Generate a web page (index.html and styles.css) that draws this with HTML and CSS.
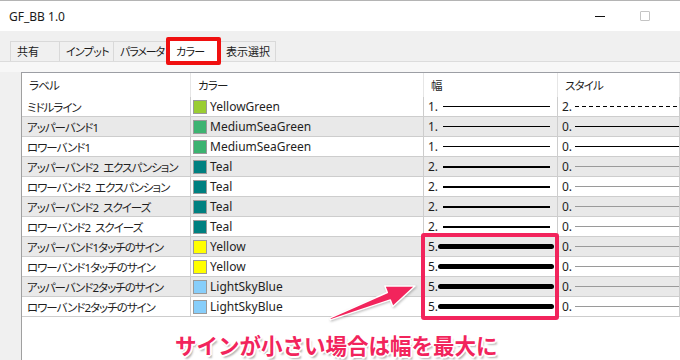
FILE: index.html
```html
<!DOCTYPE html>
<html lang="ja">
<head>
  <meta charset="UTF-8" />
  <title>GF_BB 1.0</title>
  <link rel="stylesheet" href="styles.css">
</head>
<body>
  <div class="window">
    <div class="titlebar">
      <span class="title">GF_BB 1.0</span>
      <div class="controls">
        <span class="min"></span>
        <span class="max"></span>
      </div>
    </div>

    <div class="tabbar">
      <div class="tab t-common">共有</div>
      <div class="tab t-input">インプット</div>
      <div class="tab t-param">パラメータ</div>
      <div class="tab t-color active">カラー</div>
      <div class="tab t-view">表示選択</div>
    </div>

    <div class="page">
      <div class="grid">
        <div class="row head">
          <div class="cell">ラベル</div>
          <div class="cell">カラー</div>
          <div class="cell">幅</div>
          <div class="cell">スタイル</div>
        </div>

        <div class="row">
          <div class="cell label">ミドルライン</div>
          <div class="cell"><span class="sw yellowgreen"></span>YellowGreen</div>
          <div class="cell wcell"><span class="num">1.</span><span class="wl w1"></span></div>
          <div class="cell scell"><span class="num">2.</span><span class="sl dash"></span></div>
        </div>
        <div class="row">
          <div class="cell label">アッパーバンド1</div>
          <div class="cell"><span class="sw seagreen"></span>MediumSeaGreen</div>
          <div class="cell wcell"><span class="num">1.</span><span class="wl w1"></span></div>
          <div class="cell scell"><span class="num">0.</span><span class="sl solid"></span></div>
        </div>
        <div class="row">
          <div class="cell label">ロワーバンド1</div>
          <div class="cell"><span class="sw seagreen"></span>MediumSeaGreen</div>
          <div class="cell wcell"><span class="num">1.</span><span class="wl w1"></span></div>
          <div class="cell scell"><span class="num">0.</span><span class="sl solid"></span></div>
        </div>
        <div class="row">
          <div class="cell label">アッパーバンド2 エクスパンション</div>
          <div class="cell"><span class="sw teal"></span>Teal</div>
          <div class="cell wcell"><span class="num">2.</span><span class="wl w2"></span></div>
          <div class="cell scell"><span class="num">0.</span><span class="sl thin"></span></div>
        </div>
        <div class="row">
          <div class="cell label">ロワーバンド2 エクスパンション</div>
          <div class="cell"><span class="sw teal"></span>Teal</div>
          <div class="cell wcell"><span class="num">2.</span><span class="wl w2"></span></div>
          <div class="cell scell"><span class="num">0.</span><span class="sl thin"></span></div>
        </div>
        <div class="row">
          <div class="cell label">アッパーバンド2 スクイーズ</div>
          <div class="cell"><span class="sw teal"></span>Teal</div>
          <div class="cell wcell"><span class="num">2.</span><span class="wl w2"></span></div>
          <div class="cell scell"><span class="num">0.</span><span class="sl thin"></span></div>
        </div>
        <div class="row">
          <div class="cell label">ロワーバンド2 スクイーズ</div>
          <div class="cell"><span class="sw teal"></span>Teal</div>
          <div class="cell wcell"><span class="num">2.</span><span class="wl w2"></span></div>
          <div class="cell scell"><span class="num">0.</span><span class="sl thin"></span></div>
        </div>
        <div class="row">
          <div class="cell label">アッパーバンド1タッチのサイン</div>
          <div class="cell"><span class="sw yellow"></span>Yellow</div>
          <div class="cell wcell"><span class="num">5.</span><span class="wl w5"></span></div>
          <div class="cell scell"><span class="num">0.</span><span class="sl thin"></span></div>
        </div>
        <div class="row">
          <div class="cell label">ロワーバンド1タッチのサイン</div>
          <div class="cell"><span class="sw yellow"></span>Yellow</div>
          <div class="cell wcell"><span class="num">5.</span><span class="wl w5"></span></div>
          <div class="cell scell"><span class="num">0.</span><span class="sl thin"></span></div>
        </div>
        <div class="row">
          <div class="cell label">アッパーバンド2タッチのサイン</div>
          <div class="cell"><span class="sw skyblue"></span>LightSkyBlue</div>
          <div class="cell wcell"><span class="num">5.</span><span class="wl w5"></span></div>
          <div class="cell scell"><span class="num">0.</span><span class="sl thin"></span></div>
        </div>
        <div class="row">
          <div class="cell label">ロワーバンド2タッチのサイン</div>
          <div class="cell"><span class="sw skyblue"></span>LightSkyBlue</div>
          <div class="cell wcell"><span class="num">5.</span><span class="wl w5"></span></div>
          <div class="cell scell"><span class="num">0.</span><span class="sl thin"></span></div>
        </div>
      </div>
    </div>

    <!-- annotation overlay -->
    <div class="mark-box"></div>
    <svg class="arrow" width="680" height="360" viewBox="0 0 680 360">
      <polygon points="329.6,317.1 387.3,291.5 384.8,284.9 415,285 392.8,305.5 390.3,298.9 330.4,318.9"
               fill="#f2245c" stroke="#ffffff" stroke-width="1.5" stroke-linejoin="round" />
    </svg>
    <div class="note">サインが小さい場合は幅を最大に</div>
  </div>
</body>
</html>
```

FILE: styles.css
```css
body {
  margin: 0;
  background-color: #ffffff;
  font-family: "Noto Sans", "Noto Sans CJK JP", sans-serif;
  font-size: 12px;
  color: #1e1e1e;
}

.window {
  position: relative;
  width: 680px;
  height: 360px;
  overflow: hidden;
  background-color: #f0f0f0;
  border-top: 1px solid #b4b4b4;
  box-sizing: border-box;
}

.titlebar {
  height: 30px;
  background-color: #ffffff;
  display: flex;
  align-items: center;
  justify-content: space-between;
  padding-left: 9px;
}

.title {
  font-size: 12px;
  color: #1a1a1a;
}

.controls {
  display: flex;
  align-items: center;
  gap: 35px;
  padding-right: 30px;
}

.min {
  width: 10px;
  height: 1px;
  background-color: #111111;
}

.max {
  width: 8px;
  height: 8px;
  border: 1px solid #c4c4c4;
  border-radius: 1px;
}

.tabbar {
  height: 30px;
  display: flex;
  align-items: flex-end;
  padding-left: 10px;
  font-feature-settings: "palt";
}

.tab {
  height: 19px;
  line-height: 20px;
  padding-left: 6px;
  box-sizing: content-box;
  border: 1px solid #d9d9d9;
  border-bottom: none;
  margin-right: -1px;
  font-size: 11px;
  letter-spacing: -0.7px;
  color: #1a1a1a;
  background-color: #f0f0f0;
  white-space: nowrap;
  overflow: hidden;
}

.t-common { width: 42px; letter-spacing: 0; }
.t-input { width: 47px; }
.t-param { width: 47px; letter-spacing: -1.1px; }
.t-color { width: 45px; }
.t-view { width: 49px; letter-spacing: 0; }

.tab.active {
  position: relative;
  overflow: visible;
  height: 23px;
  line-height: 25px;
  padding-left: 8px;
  width: 43px;
  background-color: #ffffff;
  margin-bottom: -1px;
  z-index: 1;
}

.tab.active::after {
  content: "";
  position: absolute;
  left: -2px;
  top: -2px;
  right: -2px;
  bottom: -3px;
  border: 4px solid #f01010;
  border-radius: 2px;
}

.page {
  height: 100%;
  border-top: 1px solid #dcdcdc;
  padding: 10px 0 0 21px;
  background: linear-gradient(#f7f7f7, #f7f7f7) top / 100% 10px no-repeat, #f0f0f0;
}

.grid {
  height: 100%;
  background-color: #ffffff;
  border-top: 1px solid #9c9ea4;
  border-left: 1px solid #a0a0a0;
  font-feature-settings: "palt";
}

.row {
  display: grid;
  grid-template-columns: 169px 233px 134px 1fr;
  height: 20px;
  box-sizing: border-box;
  border-bottom: 1px solid #cdcdcd;
}

.row:nth-child(odd) {
  background-color: #e9e9e9;
}

.row.head {
  height: 24px;
  border-bottom: none;
  background-color: #ffffff;
}

.cell {
  display: flex;
  align-items: center;
  overflow: hidden;
  white-space: nowrap;
  padding-left: 5px;
  border-right: 1px solid #cdcdcd;
}

.cell.label {
  font-size: 11.5px;
  letter-spacing: -1px;
  word-spacing: 3px;
}

.head .cell {
  padding-left: 7px;
  font-size: 11.5px;
  letter-spacing: -0.8px;
  border-right-color: #e6e6e6;
}

.sw {
  width: 12px;
  height: 12px;
  border: 1px solid #9a9a9a;
  margin: 0 3px 0 -3px;
  flex-shrink: 0;
}

.yellowgreen { background-color: #9acd32; }
.seagreen { background-color: #3cb371; }
.teal { background-color: #008080; }
.yellow { background-color: #ffff00; }
.skyblue { background-color: #87cefa; }

.wcell,
.scell {
  padding-left: 4px;
}

.num {
  flex-shrink: 0;
}

.wcell .num {
  width: 15px;
}

.scell .num {
  width: 13px;
}

.wl {
  width: 107px;
  background-color: #000000;
}

.w1 { height: 1px; }
.w2 { height: 2px; }

.w5 {
  height: 5px;
  width: 116px;
  margin-left: -5px;
  border-radius: 3px;
}

.sl {
  flex: 1;
  height: 1px;
}

.solid { background-color: #000000; }
.thin { background-color: #9a9a9a; }

.dash {
  background: repeating-linear-gradient(90deg, #000000 0 4px, transparent 4px 7px);
}

.mark-box {
  position: absolute;
  left: 421px;
  top: 232px;
  width: 138px;
  height: 87px;
  box-sizing: border-box;
  border: 4px solid #f2245c;
  border-radius: 3px;
}

.arrow {
  position: absolute;
  left: 0;
  top: 0;
  filter: drop-shadow(1px 1px 1px rgba(0, 0, 0, 0.25));
}

.note {
  position: absolute;
  left: 175px;
  top: 333px;
  font-family: "Noto Sans CJK JP", sans-serif;
  font-size: 21.5px;
  font-weight: 700;
  line-height: 1;
  color: #f2245c;
  text-shadow:
    -1px -1px 0 #fff, 1px -1px 0 #fff, -1px 1px 0 #fff, 1px 1px 0 #fff,
    2px 0 0 #fff, -2px 0 0 #fff, 0 2px 0 #fff, 0 -2px 0 #fff,
    2px 3px 2px rgba(0, 0, 0, 0.3);
}
```
